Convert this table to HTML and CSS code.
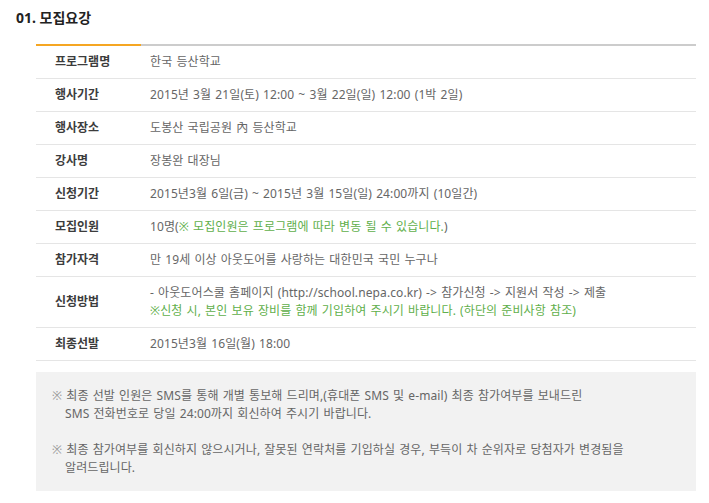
FILE: index.html
```html
<!DOCTYPE html>
<html lang="ko">
<head>
<meta charset="utf-8">
<link rel="stylesheet" href="styles.css">
</head>
<body>
<div class="page">
  <h2 class="title">01. 모집요강</h2>
  <div class="content">
    <table class="info">
      <tbody>
        <tr><th>프로그램명</th><td>한국 등산학교</td></tr>
        <tr><th>행사기간</th><td>2015년 3월 21일(토) 12:00 ~ 3월 22일(일) 12:00 (1박 2일)</td></tr>
        <tr><th>행사장소</th><td>도봉산 국립공원 內 등산학교</td></tr>
        <tr><th>강사명</th><td>장봉완 대장님</td></tr>
        <tr><th>신청기간</th><td>2015년3월 6일(금) ~ 2015년 3월 15일(일) 24:00까지 (10일간)</td></tr>
        <tr><th>모집인원</th><td>10명(<span class="green">※ 모집인원은 프로그램에 따라 변동 될 수 있습니다.</span>)</td></tr>
        <tr><th>참가자격</th><td>만 19세 이상 아웃도어를 사랑하는 대한민국 국민 누구나</td></tr>
        <tr><th>신청방법</th><td>- 아웃도어스쿨 홈페이지 (http://school.nepa.co.kr) -&gt; 참가신청 -&gt; 지원서 작성 -&gt; 제출<br><span class="green">※신청 시, 본인 보유 장비를 함께 기입하여 주시기 바랍니다. (하단의 준비사항 참조)</span></td></tr>
        <tr><th>최종선발</th><td>2015년3월 16일(월) 18:00</td></tr>
      </tbody>
    </table>
    <div class="notice">
      <p><span class="mark">※</span> 최종 선발 인원은 SMS를 통해 개별 통보해 드리며,(휴대폰 SMS 및 e-mail) 최종 참가여부를 보내드린<br>SMS 전화번호로 당일 24:00까지 회신하여 주시기 바랍니다.</p>
      <p><span class="mark">※</span> 최종 참가여부를 회신하지 않으시거나, 잘못된 연락처를 기입하실 경우, 부득이 차 순위자로 당첨자가 변경됨을<br>알려드립니다.</p>
    </div>
  </div>
</div>
</body>
</html>
```
FILE: styles.css
```css
html, body {
  margin: 0;
  padding: 0;
  background: #fff;
}
body {
  font-family: "Noto Sans", "Noto Sans CJK KR", sans-serif;
  font-size: 12px;
  color: #666;
}
.page {
  padding: 8px 13px 0 16px;
}
.title {
  margin: 0;
  font-size: 14px;
  line-height: 20px;
  font-weight: 700;
  color: #222;
}
.content {
  margin: 16px 0 0 20px;
  width: 660px;
}
.info {
  width: 100%;
  border-collapse: collapse;
  border-spacing: 0;
}
.info th,
.info td {
  padding: 7px 0;
  line-height: 18px;
  border-bottom: 1px solid #e5e5e5;
  text-align: left;
  vertical-align: middle;
}
.info th {
  width: 86px;
  padding-left: 19px;
  font-weight: 700;
  color: #3c3c3c;
}
.info td {
  padding-left: 9px;
  letter-spacing: 0.1px;
  word-spacing: 0.9px;
}
.info tr:first-child th {
  border-top: 2px solid #f5a623;
}
.info tr:first-child td {
  border-top: 2px solid #cccccc;
}
.green {
  color: #5faf4b;
}
.notice {
  margin-top: 11px;
  background: #f2f2f2;
  padding: 15px 16px 14px 29px;
  line-height: 18px;
  letter-spacing: 0.1px;
  word-spacing: 0.9px;
}
.notice p {
  margin: 0;
  text-indent: -13px;
}
.notice p + p {
  margin-top: 18px;
}
.mark {
  color: #999;
}
```
